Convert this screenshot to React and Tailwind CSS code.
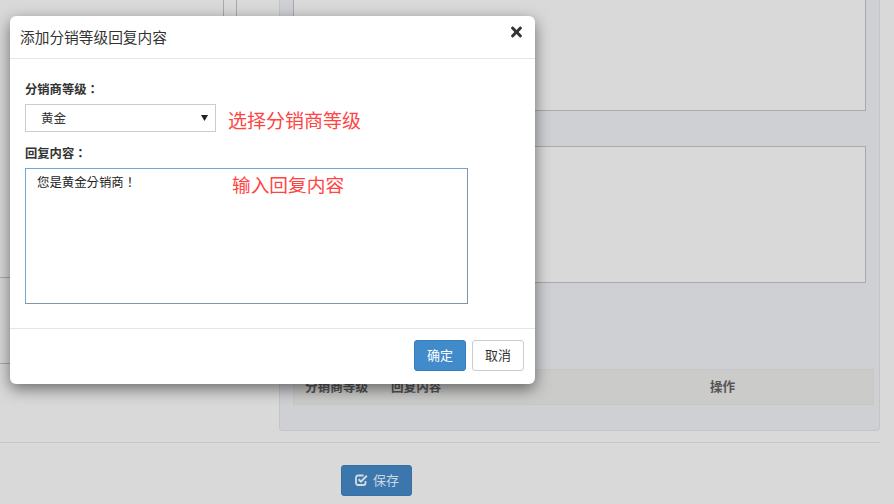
import React from "react";
import { FaTimes } from "react-icons/fa";

const font = { fontFamily: '"Noto Sans CJK SC", "Liberation Sans", sans-serif' };
const fontTc = { fontFamily: '"Noto Sans CJK TC", "Liberation Sans", sans-serif' };

const Modal = () => {
  return (
    <div className="absolute left-[10px] top-[16px] w-[525px] h-[368px] bg-white rounded-[6px] shadow-[0_5px_15px_rgba(0,0,0,0.5)] flex flex-col">
      {/* header */}
      <div className="h-[43px] border-b border-[#e5e5e5] flex items-center justify-between pl-[10px] pr-[13px] shrink-0">
        <h4 className="text-[14.7px] text-[#333] font-normal">添加分销等级回复内容</h4>
        <button className="text-[#333] -mt-[10px]">
          <FaTimes className="w-[11px] h-[16px]" />
        </button>
      </div>

      {/* body */}
      <div className="flex-1 pl-[15px] pt-[21px]">
        <label className="block text-[12.3px] leading-[18px] font-bold text-[#333]">
          分销商等级<span style={fontTc}>：</span>
        </label>
        <div className="flex items-start mt-[6px]">
          <div className="w-[191px] h-[28px] border border-[#ccc] flex items-center justify-between pl-[15px] pr-[7px] text-[12.5px] text-[#333]">
            <span>黄金</span>
            <svg width="7" height="7" viewBox="0 0 7 7" className="fill-[#222] -mt-[1px]">
              <path d="M0 1h7L3.5 7z" />
            </svg>
          </div>
          <span className="ml-[12px] mt-[2px] text-[19px] leading-[28px] text-[#ff4444]">选择分销商等级</span>
        </div>
        <label className="block mt-[10px] text-[12.3px] leading-[18px] font-bold text-[#333]">
          回复内容<span style={fontTc}>：</span>
        </label>
        <div className="relative mt-[6px] w-[443px] h-[136px]">
          <textarea
            style={fontTc}
            readOnly
            defaultValue="您是黄金分销商！"
            className="w-full h-full block border border-[#6fa8d6] border-b-[#7f97ac] border-r-[#7f97ac] pl-[11px] pt-[4px] text-[12.4px] leading-[18px] text-[#222] outline-none resize-none"
          />
          <span className="absolute left-[207px] top-[2px] text-[18.7px] leading-[28px] text-[#ff4444]">输入回复内容</span>
        </div>
      </div>

      {/* footer */}
      <div className="h-[56px] border-t border-[#e5e5e5] flex items-start justify-end gap-[6px] pt-[11px] pr-[11px] shrink-0">
        <button className="w-[52px] h-[31px] pb-[2px] bg-[#428bca] border border-[#357ebd] rounded-[3px] text-[13px] text-white">确定</button>
        <button className="w-[52px] h-[31px] pb-[2px] bg-white border border-[#ccc] rounded-[3px] text-[13px] text-[#333]">取消</button>
      </div>
    </div>
  );
};

const App = () => {
  return (
    <div style={font} className="relative w-[894px] h-[504px] overflow-hidden bg-[#d9d9d9]">
      <div className="w-[880px] h-[443px] border-b border-[#c6c6c6] flex items-start">
        {/* left column, mostly under the modal */}
        <div className="w-[279px] shrink-0">
          <div className="flex">
            <div className="w-[224px] h-[278px] border-r border-b border-[#a9a9a9]"></div>
            <div className="ml-[12px] w-[43px] h-[278px] border-l border-[#a9a9a9]"></div>
          </div>
          <div className="w-[224px] h-[86px] border-b border-[#a9a9a9]"></div>
        </div>

        {/* right panel */}
        <div className="w-[601px] h-[431px] bg-[#cfd0d4] border-r border-b border-l border-[#c4c5c9] rounded-b-[4px] pl-[13px] pr-[5px]">
          <div className="w-[573px] h-[111px] bg-[#d9d9d9] border-r border-b border-l border-[#a9a9a9]"></div>
          <div className="w-[573px] h-[137px] mt-[35px] bg-[#d9d9d9] border border-[#a9a9a9]"></div>
          <div className="mt-[86px] h-[36px] bg-[#cbcbca] border border-[#c6c6c6] flex items-center text-[12.6px] leading-[16px] pb-[2px] font-bold text-[#555]">
            <span className="ml-[11px] w-[86px]">分销商等级</span>
            <span className="w-[319px]">回复内容</span>
            <span>操作</span>
          </div>
        </div>
      </div>

      <div className="pl-[341px] pt-[22px]">
        <button className="w-[71px] h-[31px] pb-[2px] bg-[#3b76ad] border border-[#3670a6] rounded-[3px] flex items-center justify-center gap-[5px] pl-[1px] text-[13px] text-[#c9d7e4]">
          <svg width="13" height="12" viewBox="0 0 13 12" fill="none" stroke="#d3dde6" strokeWidth="1.8">
            <path d="M10.5 7v2a2 2 0 0 1-2 2H3a2 2 0 0 1-2-2V3.5a2 2 0 0 1 2-2h5.5" />
            <path d="M3.6 5.2l2.4 2.4 5.8-5.8" strokeWidth="2" />
          </svg>
          保存
        </button>
      </div>

      <Modal />
    </div>
  );
};

export default App;
